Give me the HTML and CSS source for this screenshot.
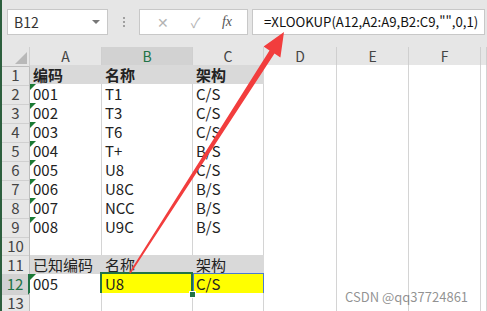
FILE: index.html
```html
<!DOCTYPE html>
<html lang="zh-CN">
<head>
  <meta charset="UTF-8">
  <title>XLOOKUP</title>
  <link rel="stylesheet" href="styles.css">
</head>
<body>
  <div class="app">
    <div class="toolbar">
      <div class="namebox"><span>B12</span><span class="caret"></span></div>
      <div class="grip"><i></i><i></i><i></i></div>
      <div class="fbtns">
        <span class="btn">✕</span>
        <span class="btn">✓</span>
        <span class="btn fx">fx</span>
      </div>
      <div class="formula">=XLOOKUP(A12,A2:A9,B2:C9,"",0,1)</div>
    </div>

    <div class="sheet">
      <div class="row head">
        <div class="hd corner"></div><div class="hd">A</div><div class="hd sel">B</div><div class="hd">C</div><div class="hd">D</div><div class="hd">E</div><div class="hd">F</div><div class="hd"></div>
      </div>
      <div class="row">
        <div class="rh">1</div><div class="cell gray bold">编码</div><div class="cell gray bold">名称</div><div class="cell gray bold">架构</div><div class="cell"></div><div class="cell"></div><div class="cell"></div><div class="cell"></div>
      </div>
      <div class="row">
        <div class="rh">2</div><div class="cell tri">001</div><div class="cell">T1</div><div class="cell">C/S</div><div class="cell"></div><div class="cell"></div><div class="cell"></div><div class="cell"></div>
      </div>
      <div class="row">
        <div class="rh">3</div><div class="cell tri">002</div><div class="cell">T3</div><div class="cell">C/S</div><div class="cell"></div><div class="cell"></div><div class="cell"></div><div class="cell"></div>
      </div>
      <div class="row">
        <div class="rh">4</div><div class="cell tri">003</div><div class="cell">T6</div><div class="cell">C/S</div><div class="cell"></div><div class="cell"></div><div class="cell"></div><div class="cell"></div>
      </div>
      <div class="row">
        <div class="rh">5</div><div class="cell tri">004</div><div class="cell">T+</div><div class="cell">B/S</div><div class="cell"></div><div class="cell"></div><div class="cell"></div><div class="cell"></div>
      </div>
      <div class="row">
        <div class="rh">6</div><div class="cell tri">005</div><div class="cell">U8</div><div class="cell">C/S</div><div class="cell"></div><div class="cell"></div><div class="cell"></div><div class="cell"></div>
      </div>
      <div class="row">
        <div class="rh">7</div><div class="cell tri">006</div><div class="cell">U8C</div><div class="cell">B/S</div><div class="cell"></div><div class="cell"></div><div class="cell"></div><div class="cell"></div>
      </div>
      <div class="row">
        <div class="rh">8</div><div class="cell tri">007</div><div class="cell">NCC</div><div class="cell">B/S</div><div class="cell"></div><div class="cell"></div><div class="cell"></div><div class="cell"></div>
      </div>
      <div class="row">
        <div class="rh">9</div><div class="cell tri">008</div><div class="cell">U9C</div><div class="cell">B/S</div><div class="cell"></div><div class="cell"></div><div class="cell"></div><div class="cell"></div>
      </div>
      <div class="row">
        <div class="rh">10</div><div class="cell"></div><div class="cell"></div><div class="cell"></div><div class="cell"></div><div class="cell"></div><div class="cell"></div><div class="cell"></div>
      </div>
      <div class="row">
        <div class="rh">11</div><div class="cell gray">已知编码</div><div class="cell gray">名称</div><div class="cell gray">架构</div><div class="cell"></div><div class="cell"></div><div class="cell"></div><div class="cell"></div>
      </div>
      <div class="row">
        <div class="rh sel">12</div><div class="cell tri">005</div><div class="cell yellow active">U8</div><div class="cell yellow ref">C/S</div><div class="cell"></div><div class="cell"></div><div class="cell"></div><div class="cell"></div>
      </div>
      <div class="row">
        <div class="rh">13</div><div class="cell"></div><div class="cell"></div><div class="cell"></div><div class="cell"></div><div class="cell"></div><div class="cell"></div><div class="cell"></div>
      </div>
    </div>

    <svg class="arrow" width="487" height="311" viewBox="0 0 487 311">
      <polygon fill="#f23d3d" points="129.3,272.6 269.5,50.4 263.6,46.6 284,32 280.4,57.4 274.5,53.6 130.7,273.4"/>
    </svg>

    <div class="watermark">CSDN @qq37724861</div>
  </div>
</body>
</html>
```

FILE: styles.css
```css
body {
  margin: 0;
  background: #e6e6e6;
  font-family: "Noto Sans CJK SC", "Noto Sans", sans-serif;
  color: #222;
}

.app {
  position: relative;
  width: 487px;
  height: 311px;
  overflow: hidden;
  border-left: 2px solid #2d5f3e;
  box-sizing: border-box;
}

/* formula bar */
.toolbar {
  display: flex;
  height: 47px;
  padding: 9px 2px 0 5px;
  box-sizing: border-box;
}

.namebox {
  flex: 0 0 101px;
  height: 26px;
  background: #fff;
  border: 1px solid #c8c8c8;
  box-sizing: border-box;
  display: flex;
  align-items: center;
  justify-content: space-between;
  padding: 0 7px 0 6px;
  font-size: 14px;
  color: #333;
}

.caret {
  width: 0;
  height: 0;
  border-left: 4px solid transparent;
  border-right: 4px solid transparent;
  border-top: 4px solid #777;
}

.grip {
  flex: 0 0 31px;
  display: flex;
  flex-direction: column;
  align-items: center;
  justify-content: center;
  gap: 2px;
  height: 26px;
}

.grip i {
  width: 2px;
  height: 2px;
  background: #a0a0a0;
}

.fbtns {
  flex: 0 0 109px;
  height: 26px;
  background: #fff;
  border: 1px solid #c8c8c8;
  box-sizing: border-box;
  display: flex;
  align-items: center;
  justify-content: space-around;
  padding: 0 4px 0 6px;
  color: #b4b4b4;
  font-size: 14px;
}

.btn.fx {
  font-family: "Liberation Serif", serif;
  font-style: italic;
  color: #555;
  font-size: 14px;
}

.formula {
  flex: 1;
  min-width: 0;
  overflow: hidden;
  margin-left: 4px;
  height: 26px;
  background: #fff;
  border: 1px solid #c8c8c8;
  box-sizing: border-box;
  padding-left: 11px;
  font-size: 13.2px;
  line-height: 24px;
  color: #111;
  white-space: nowrap;
}

/* grid */
.row {
  display: grid;
  grid-template-columns: 28px 72px 91px 71px 73px 72px 72px 1fr;
  height: 19px;
}

.row.head {
  height: 18px;
}

.hd {
  border-right: 1px solid #cfcfcf;
  border-bottom: 1px solid #bdbdbd;
  text-align: center;
  font-size: 14px;
  line-height: 18px;
  color: #444;
  box-sizing: border-box;
  position: relative;
}

.hd.sel {
  background: #d2d2d2;
  color: #217346;
  border-bottom: 2px solid #217346;
}

.corner::after {
  content: "";
  position: absolute;
  right: 2px;
  bottom: 2px;
  border-left: 12px solid transparent;
  border-bottom: 12px solid #b8b8b8;
}

.rh {
  border-right: 1px solid #bdbdbd;
  border-bottom: 1px solid #d0d0d0;
  text-align: center;
  font-size: 15px;
  line-height: 19px;
  color: #444;
  box-sizing: border-box;
}

.rh.sel {
  background: #d2d2d2;
  color: #217346;
  border-right: 2px solid #217346;
}

.cell {
  background: #fff;
  border-right: 1px solid #d4d4d4;
  border-bottom: 1px solid #d4d4d4;
  box-sizing: border-box;
  padding-left: 3px;
  font-size: 15px;
  line-height: 20px;
  white-space: nowrap;
  position: relative;
}

.cell.gray {
  background: #d9d9d9;
  border-right-color: #d9d9d9;
}

.cell.bold {
  font-weight: bold;
}

.cell.yellow {
  background: #ffff00;
}

.cell.tri::before {
  content: "";
  position: absolute;
  left: 0;
  top: 0;
  border-top: 6px solid #1b7a34;
  border-right: 6px solid transparent;
}

.cell.active::after {
  content: "";
  position: absolute;
  left: -2px;
  top: -2px;
  right: -1px;
  bottom: -1px;
  border: 2px solid #217346;
}

.cell.active::before {
  content: "";
  position: absolute;
  right: -4px;
  bottom: -4px;
  width: 5px;
  height: 5px;
  background: #217346;
  border: 1px solid #fff;
  z-index: 2;
}

.cell.ref::after {
  content: "";
  position: absolute;
  left: 0;
  top: -1px;
  right: -1px;
  bottom: -1px;
  border: 1px solid #4a7bd0;
}

.arrow {
  position: absolute;
  left: -2px;
  top: 0;
}

.watermark {
  position: absolute;
  left: 343px;
  top: 287px;
  font-size: 13px;
  color: rgba(110, 110, 110, 0.75);
  white-space: nowrap;
}
```
